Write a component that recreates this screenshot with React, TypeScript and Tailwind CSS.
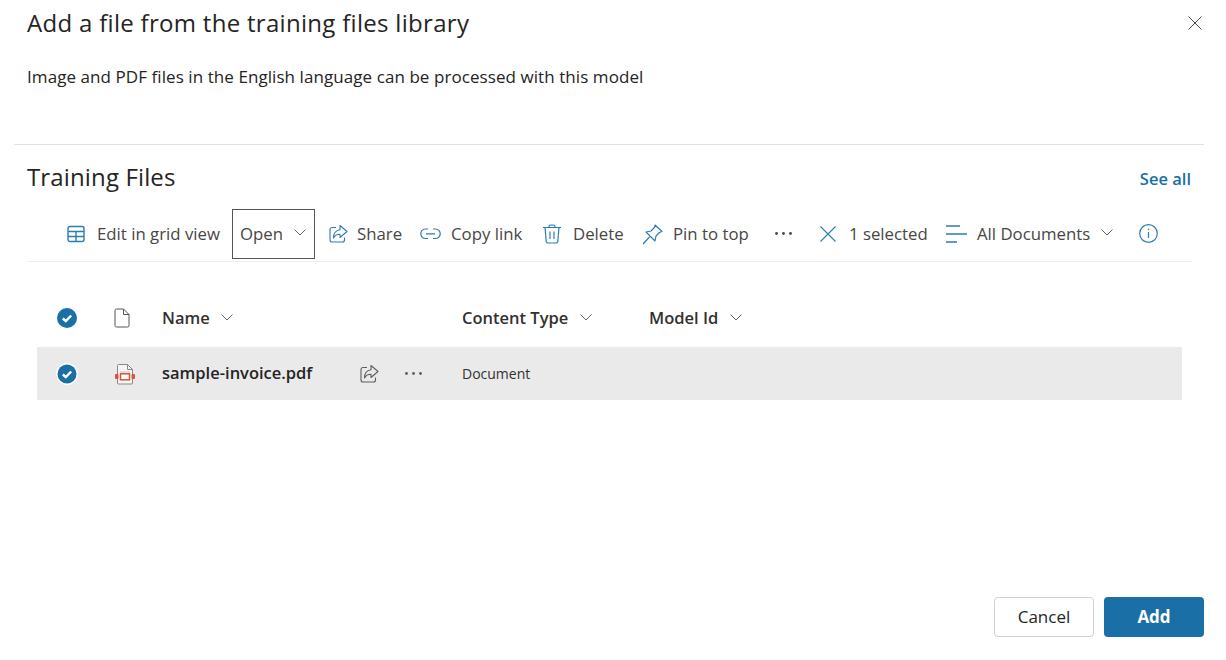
function ShareIcon({ className }: { className: string }) {
  return (
    <svg viewBox="0 0 20 20" fill="none" stroke="currentColor" strokeWidth="1.1" className={className}>
      <path d="M8 3.500H4a2 2 0 0 0-2 2v10.500a2 2 0 0 0 2 2h10.500a2 2 0 0 0 2-2V13.500" />
      <path d="M12 1.500 19 7.500 12 13.500v-3.200c-3 0-5 .8-6.500 3.700 0-4.800 2.500-7.800 6.500-8.300z" strokeLinejoin="round" />
    </svg>
  );
}

function Chevron({ className }: { className: string }) {
  return (
    <svg viewBox="0 0 12 7" fill="none" stroke="currentColor" strokeWidth="1" className={className}>
      <path d="M.5.5 6 6l5.500-5.500" />
    </svg>
  );
}

function Dots({ className }: { className: string }) {
  return (
    <svg viewBox="0 0 17 3" fill="currentColor" className={className}>
      <circle cx="1.500" cy="1.500" r="1.400" />
      <circle cx="8.500" cy="1.500" r="1.400" />
      <circle cx="15.500" cy="1.500" r="1.400" />
    </svg>
  );
}

function Cross({ className }: { className: string }) {
  return (
    <svg viewBox="0 0 16 16" fill="none" stroke="currentColor" strokeWidth="1.100" className={className}>
      <path d="M.5.5l15 15M15.500.5l-15 15" />
    </svg>
  );
}

function CheckCircle({ ring }: { ring?: boolean }) {
  return (
    <svg viewBox="0 0 22 22" className="w-[22px] h-[22px]">
      {ring && <circle cx="11" cy="11" r="11" fill="#ffffff" />}
      <circle cx="11" cy="11" r={ring ? 9.5 : 10} fill="#1a6fa6" />
      <path d="M6.800 11.500 9.800 14 15.200 8.500" fill="none" stroke="#ffffff" strokeWidth="2.400" />
    </svg>
  );
}

function ToolbarItem({ icon, label, className }: { icon: React.ReactNode; label: string; className: string }) {
  return (
    <div className={`flex items-center ${className}`}>
      {icon}
      <span>{label}</span>
    </div>
  );
}

export default function App() {
  return (
    <div className="w-[1226px] h-[660px] bg-white flex flex-col text-[#323130] font-['Open_Sans','Liberation_Sans',sans-serif] overflow-hidden">
      <div className="h-[144px] shrink-0 pl-[27px] pr-[24px]">
        <div className="flex items-center justify-between h-[46px]">
          <h1 className="text-[24px] text-[#252423] tracking-[0.3px]">Add a file from the training files library</h1>
          <Cross className="w-[14px] h-[14px] text-[#444444]" />
        </div>
        <p className="mt-[17px] text-[17px] leading-[28px] text-[#252423] tracking-[0.07px]">
          Image and PDF files in the English language can be processed with this model
        </p>
      </div>

      <div className="ml-[14px] mr-[22px] h-px bg-[#e1e1e1] shrink-0" />

      <div className="h-[64px] shrink-0 pl-[27px] pr-[35px] flex items-center justify-between">
        <h2 className="text-[24px] text-[#252423] tracking-[0.14px]">Training Files</h2>
        <a className="text-[16.500px] font-semibold text-[#1a6fa6] mt-[5px]">See all</a>
      </div>

      <div className="ml-[27px] mr-[34px] h-[53px] shrink-0 border-b border-[#eeeeee] pl-[40px] flex text-[16.800px] text-[#484644]">
        <ToolbarItem
          className="h-[50px] w-[165px]"
          label="Edit in grid view"
          icon={
            <svg viewBox="0 0 18 18" fill="none" stroke="currentColor" strokeWidth="1.400" className="w-[18px] h-[18px] mr-[12px] text-[#2b7cb3]">
              <rect x="1" y="1.500" width="16" height="15" rx="2" />
              <path d="M1 6.500h16M1 11.500h16M9 6.500v10" />
            </svg>
          }
        />
        <div className="w-[83px] h-[50px] border border-[#555555] flex items-center justify-between pl-[7px] pr-[8px]">
          <span>Open</span>
          <Chevron className="w-[12px] h-[7px] text-[#666666] -mt-[3px]" />
        </div>
        <ToolbarItem className="h-[50px] w-[92px] pl-[13px]" label="Share" icon={<ShareIcon className="w-[20px] h-[20px] mr-[9px] text-[#2b7cb3]" />} />
        <ToolbarItem
          className="h-[50px] w-[136px] pl-[13px]"
          label="Copy link"
          icon={
            <svg viewBox="0 0 21 12" fill="none" stroke="currentColor" strokeWidth="1.200" className="w-[21px] h-[12px] mr-[10px] text-[#2b7cb3]">
              <path d="M8 1H5.500a4.500 4.500 0 0 0 0 9.500H8M13 1h2.500a4.500 4.500 0 0 1 0 9.500H13M6 5.800h9" />
            </svg>
          }
        />
        <ToolbarItem
          className="h-[50px] w-[99px]"
          label="Delete"
          icon={
            <svg viewBox="0 0 18 20" fill="none" stroke="currentColor" strokeWidth="1.200" className="w-[18px] h-[20px] mr-[12px] text-[#2b7cb3]">
              <path d="M0 3.500h18M6 3.500V2.500a1.500 1.500 0 0 1 1.500-1.500h3a1.500 1.500 0 0 1 1.500 1.500v1M2 3.500l1.200 13.800a2 2 0 0 0 2 1.700h7.600a2 2 0 0 0 2-1.700L16 3.500M7 7.500v7.500M11 7.500v7.500" />
            </svg>
          }
        />
        <ToolbarItem
          className="h-[50px] w-[133px]"
          label="Pin to top"
          icon={
            <svg viewBox="0 0 21 21" fill="none" stroke="currentColor" strokeWidth="1.200" strokeLinejoin="round" className="w-[21px] h-[21px] mr-[10px] text-[#2b7cb3]">
              <path d="M13 1 20 7.500 17.500 8.500 14 12 13 17 4 8 9 7 12.500 3.500zM7.500 13 1 20" />
            </svg>
          }
        />
        <div className="w-[45px] h-[50px] flex items-center">
          <Dots className="w-[17px] h-[3px] text-[#484644] -mt-[1px]" />
        </div>
        <ToolbarItem className="h-[50px] w-[126px]" label="1 selected" icon={<Cross className="w-[16px] h-[16px] mr-[13px] text-[#2b7cb3]" />} />
        <div className="h-[50px] w-[193px] flex items-center">
          <svg viewBox="0 0 21 20" className="w-[21px] h-[20px] mr-[10px] text-[#2b7cb3]" stroke="currentColor" strokeWidth="1.300">
            <path d="M0 2h14M0 10h21M0 18h11" />
          </svg>
          <span>All Documents</span>
          <Chevron className="w-[12px] h-[7px] ml-[11px] text-[#666666] -mt-[3px]" />
        </div>
        <div className="h-[50px] flex items-center">
          <svg viewBox="0 0 19 19" fill="none" stroke="currentColor" strokeWidth="1.200" className="w-[19px] h-[19px] text-[#2b7cb3] -mt-[2px]">
            <circle cx="9.500" cy="9.500" r="8.800" />
            <path d="M9.500 8v6" />
            <circle cx="9.500" cy="5.300" r=".8" fill="currentColor" stroke="none" />
          </svg>
        </div>
      </div>

      <div className="ml-[37px] w-[1145px] shrink-0 pt-[31px] text-[#323130]">
        <div className="h-[54px] flex items-start text-[16.500px] font-semibold pt-[5px]">
          <div className="w-[60px] h-[40px] flex items-center justify-center">
            <CheckCircle />
          </div>
          <div className="w-[65px] h-[40px] flex items-center pl-[17px]">
            <svg viewBox="0 0 16 20" className="w-[16px] h-[20px] text-[#555555]" fill="none" stroke="currentColor" strokeWidth="1">
              <path d="M1 2.500A1.500 1.500 0 0 1 2.500 1h7l5.500 5.500v11a1.500 1.500 0 0 1-1.500 1.500h-11A1.500 1.500 0 0 1 1 17.500zM9.500 1v5.500H15" />
            </svg>
          </div>
          <div className="w-[300px] h-[40px] flex items-center">
            <span>Name</span>
            <Chevron className="w-[12px] h-[7px] ml-[11px] text-[#666666] -mt-[2px]" />
          </div>
          <div className="w-[187px] h-[40px] flex items-center">
            <span>Content Type</span>
            <Chevron className="w-[12px] h-[7px] ml-[12px] text-[#666666] -mt-[2px]" />
          </div>
          <div className="h-[40px] flex items-center">
            <span>Model Id</span>
            <Chevron className="w-[12px] h-[7px] ml-[12px] text-[#666666] -mt-[2px]" />
          </div>
        </div>
        <div className="h-[53px] bg-[#eaeaea] flex items-center">
          <div className="w-[60px] flex justify-center">
            <CheckCircle ring />
          </div>
          <div className="w-[65px] flex items-center pl-[17px]">
            <svg viewBox="0 0 22 22" className="w-[22px] h-[22px]" fill="none">
              <path d="M3.500 20V2.500a1 1 0 0 1 1-1h9l5 5V20a1 1 0 0 1-1 1h-13a1 1 0 0 1-1-1z" fill="#f5f5f5" stroke="#8a8886" />
              <path d="M13.500 1.500v5h5" stroke="#8a8886" />
              <path d="M6 9h10" stroke="#c8c6c4" />
              <rect x="1" y="11" width="3.500" height="5" rx="1" fill="#d9533a" />
              <rect x="17.500" y="11" width="3.500" height="5" rx="1" fill="#d9533a" />
              <rect x="6.500" y="10.800" width="9" height="6" fill="#ffffff" stroke="#d9533a" strokeWidth="1.500" />
            </svg>
          </div>
          <div className="w-[197px] text-[16.500px] font-semibold text-[#252423]">sample-invoice.pdf</div>
          <ShareIcon className="w-[20px] h-[20px] text-[#5f5d5b]" />
          <div className="w-[83px] pl-[26px]">
            <Dots className="w-[17px] h-[3px] text-[#5f5d5b]" />
          </div>
          <div className="text-[14px] text-[#323130]">Document</div>
        </div>
      </div>

      <div className="flex-1 flex items-end justify-end gap-[10px] pr-[22px] pb-[23px]">
        <button className="w-[100px] h-[40px] rounded-[4px] border border-[#d1d1d1] bg-white text-[17px] font-medium text-[#252423]">Cancel</button>
        <button className="w-[100px] h-[40px] rounded-[4px] bg-[#1a6fa6] text-[17px] font-bold text-white">Add</button>
      </div>
    </div>
  );
}
